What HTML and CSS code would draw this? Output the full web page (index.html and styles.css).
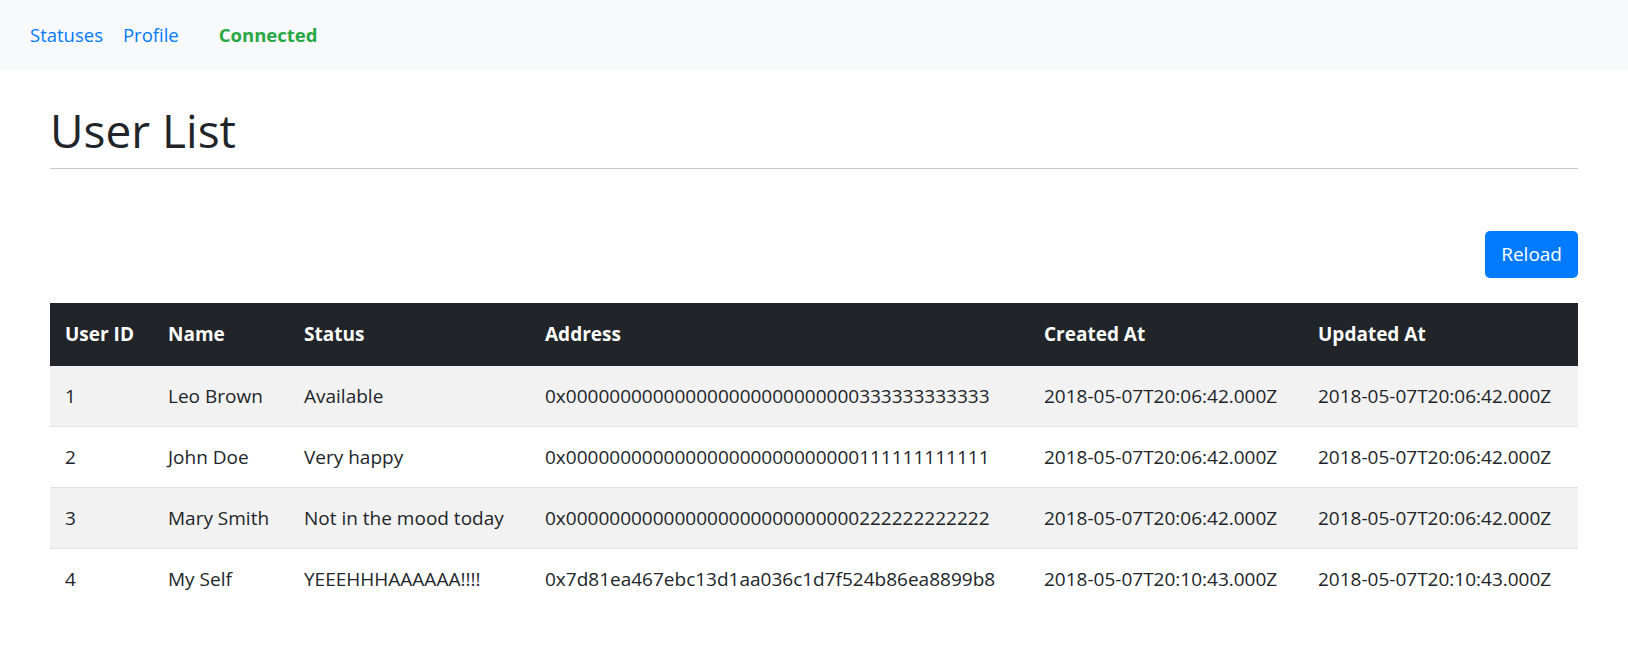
FILE: index.html
```html
<!DOCTYPE html>
<html lang="en">
<head>
    <meta charset="UTF-8">
    <meta name="viewport" content="width=device-width, initial-scale=1.0">
    <title>User List</title>
    <link rel="stylesheet" href="styles.css">
</head>
<body>
    <nav class="navbar">
        <a class="nav-link" href="#">Statuses</a>
        <a class="nav-link" href="#">Profile</a>
        <span class="nav-status">Connected</span>
    </nav>

    <div class="container">
        <h1 class="page-title">User List</h1>
        <hr>

        <div class="toolbar">
            <button class="btn-reload">Reload</button>
        </div>

        <table class="user-table">
            <colgroup>
                <col class="col-id">
                <col class="col-name">
                <col class="col-status">
                <col class="col-address">
                <col class="col-date">
                <col class="col-date-last">
            </colgroup>
            <thead>
                <tr>
                    <th>User ID</th>
                    <th>Name</th>
                    <th>Status</th>
                    <th>Address</th>
                    <th>Created At</th>
                    <th>Updated At</th>
                </tr>
            </thead>
            <tbody>
                <tr>
                    <td>1</td>
                    <td>Leo Brown</td>
                    <td>Available</td>
                    <td>0x000000000000000000000000000333333333333</td>
                    <td>2018-05-07T20:06:42.000Z</td>
                    <td>2018-05-07T20:06:42.000Z</td>
                </tr>
                <tr>
                    <td>2</td>
                    <td>John Doe</td>
                    <td>Very happy</td>
                    <td>0x000000000000000000000000000111111111111</td>
                    <td>2018-05-07T20:06:42.000Z</td>
                    <td>2018-05-07T20:06:42.000Z</td>
                </tr>
                <tr>
                    <td>3</td>
                    <td>Mary Smith</td>
                    <td>Not in the mood today</td>
                    <td>0x000000000000000000000000000222222222222</td>
                    <td>2018-05-07T20:06:42.000Z</td>
                    <td>2018-05-07T20:06:42.000Z</td>
                </tr>
                <tr>
                    <td>4</td>
                    <td>My Self</td>
                    <td>YEEEHHHAAAAAA!!!!</td>
                    <td>0x7d81ea467ebc13d1aa036c1d7f524b86ea8899b8</td>
                    <td>2018-05-07T20:10:43.000Z</td>
                    <td>2018-05-07T20:10:43.000Z</td>
                </tr>
            </tbody>
        </table>
    </div>
</body>
</html>
```

FILE: styles.css
```css
body {
    margin: 0;
    font-family: "Segoe UI", "Open Sans", Arial, sans-serif;
    font-size: 18.5px;
    line-height: 30px;
    color: #212529;
    background: #fff;
}
.navbar {
    display: flex;
    align-items: center;
    height: 70px;
    padding: 0 20px;
    background-color: #f8f9fa;
}
.nav-link {
    padding: 0 10px;
    color: #007bff;
    text-decoration: none;
}
.nav-status {
    margin-left: 20px;
    padding: 0 10px;
    color: #28a745;
    font-weight: 700;
}
.container {
    padding: 0 50px;
}
.page-title {
    margin: 33px 0 10px;
    font-size: 46px;
    font-weight: 400;
    line-height: 1.2;
}
hr {
    margin: 0;
    border: 0;
    border-top: 1px solid #c8c8c8;
}
.toolbar {
    display: flex;
    justify-content: flex-end;
    margin-top: 62px;
}
.btn-reload {
    padding: 8px 16px 9px;
    font-family: inherit;
    font-size: 19px;
    line-height: 30px;
    color: #fff;
    background-color: #007bff;
    border: none;
    border-radius: 5px;
    cursor: pointer;
}
.user-table {
    width: 100%;
    margin-top: 25px;
    border-collapse: collapse;
    table-layout: fixed;
    font-size: 19px;
}
.col-id { width: 103px; }
.col-name { width: 136px; }
.col-status { width: 241px; }
.col-address { width: 499px; }
.col-date { width: 274px; }
.col-date-last { width: 275px; }
.user-table th,
.user-table td {
    padding: 15px;
    line-height: 30px;
    text-align: left;
    white-space: nowrap;
}
.user-table th {
    padding: 16px 15px 17px;
    color: #fff;
    font-weight: 700;
    background-color: #212529;
}
.user-table td {
    border-top: 1px solid #dee2e6;
}
.user-table tbody tr:first-child td {
    border-top: none;
}
.user-table tbody tr:nth-child(odd) {
    background-color: #f2f2f2;
}
```
